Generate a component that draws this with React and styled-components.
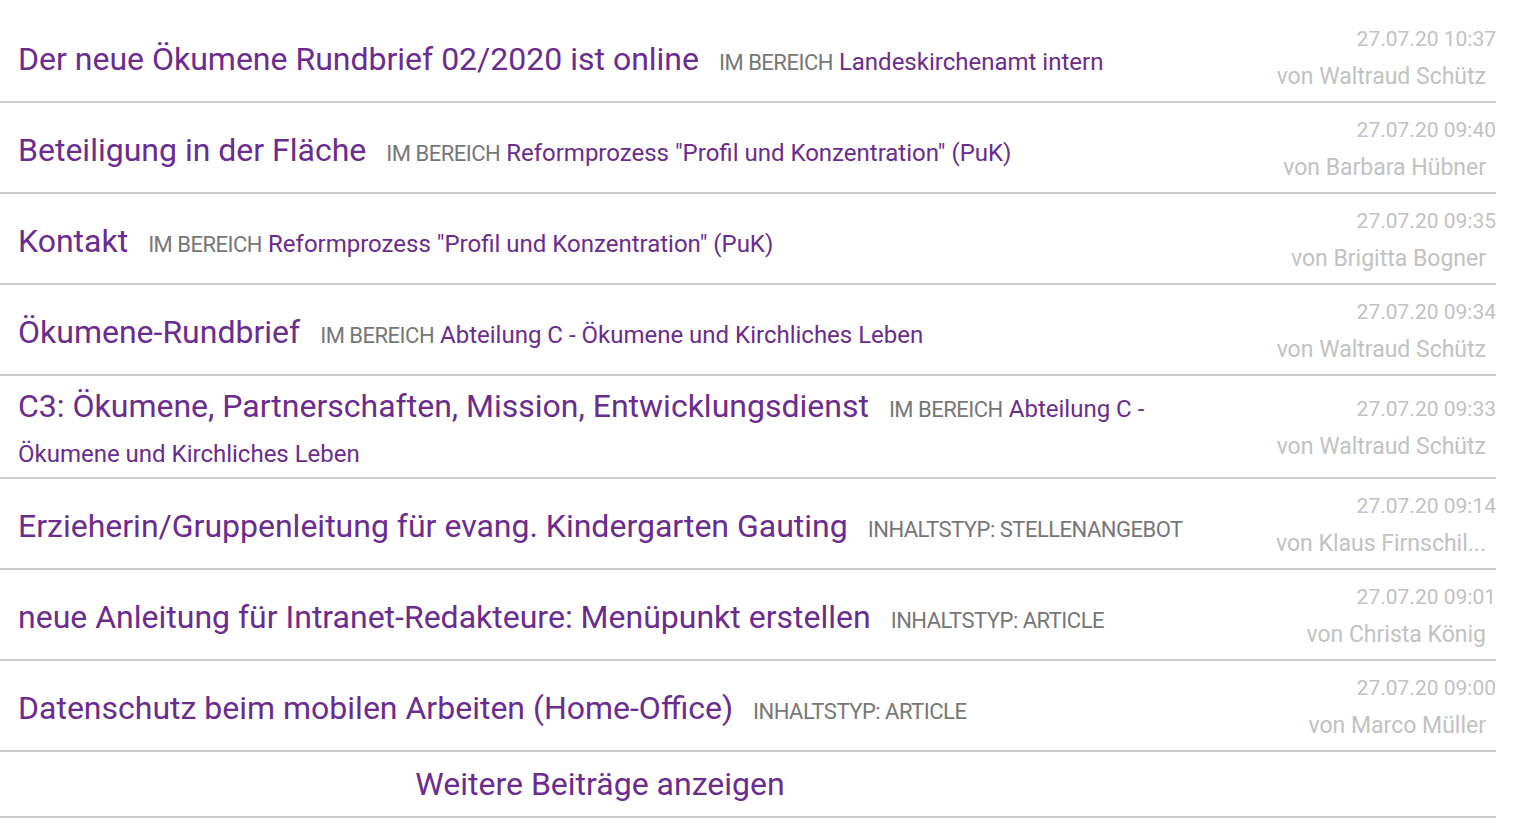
import styled, { createGlobalStyle } from "styled-components";

const GlobalStyle = createGlobalStyle`
  body {
    margin: 0;
    background: #fff;
    font-family: Roboto, "Noto Sans", Arial, sans-serif;
  }
`;

const posts = [
  {
    title: "Der neue Ökumene Rundbrief 02/2020 ist online",
    label: "IM BEREICH",
    value: "Landeskirchenamt intern",
    date: "27.07.20 10:37",
    author: "von Waltraud Schütz",
  },
  {
    title: "Beteiligung in der Fläche",
    label: "IM BEREICH",
    value: 'Reformprozess "Profil und Konzentration" (PuK)',
    date: "27.07.20 09:40",
    author: "von Barbara Hübner",
  },
  {
    title: "Kontakt",
    label: "IM BEREICH",
    value: 'Reformprozess "Profil und Konzentration" (PuK)',
    date: "27.07.20 09:35",
    author: "von Brigitta Bogner",
  },
  {
    title: "Ökumene-Rundbrief",
    label: "IM BEREICH",
    value: "Abteilung C - Ökumene und Kirchliches Leben",
    date: "27.07.20 09:34",
    author: "von Waltraud Schütz",
  },
  {
    title: "C3: Ökumene, Partnerschaften, Mission, Entwicklungsdienst",
    label: "IM BEREICH",
    value: "Abteilung C - Ökumene und Kirchliches Leben",
    date: "27.07.20 09:33",
    author: "von Waltraud Schütz",
  },
  {
    title: "Erzieherin/Gruppenleitung für evang. Kindergarten Gauting",
    label: "INHALTSTYP: STELLENANGEBOT",
    date: "27.07.20 09:14",
    author: "von Klaus Firnschil...",
  },
  {
    title: "neue Anleitung für Intranet-Redakteure: Menüpunkt erstellen",
    label: "INHALTSTYP: ARTICLE",
    date: "27.07.20 09:01",
    author: "von Christa König",
  },
  {
    title: "Datenschutz beim mobilen Arbeiten (Home-Office)",
    label: "INHALTSTYP: ARTICLE",
    date: "27.07.20 09:00",
    author: "von Marco Müller",
  },
];

const App = () => {
  return (
    <>
      <GlobalStyle />
      <ListWrapper>
        {posts.map((post, i) => (
          <PostRow key={i}>
            <PostMain>
              <PostTitle>{post.title}</PostTitle>
              <MetaLabel>{post.label}</MetaLabel>
              {post.value && <MetaValue> {post.value}</MetaValue>}
            </PostMain>
            <PostInfo>
              <PostDate>{post.date}</PostDate>
              <PostAuthor>{post.author}</PostAuthor>
            </PostInfo>
          </PostRow>
        ))}
        <MoreRow>
          <MoreLink>Weitere Beiträge anzeigen</MoreLink>
        </MoreRow>
      </ListWrapper>
    </>
  );
};

export default App;

const ListWrapper = styled.ul`
  list-style: none;
  margin: 0;
  padding: 12px 0 0;
  width: 1496px;
`;

const PostRow = styled.li`
  display: flex;
  align-items: center;
  border-bottom: 2px solid #cccccc;
  min-height: 89px;
`;

const PostMain = styled.div`
  width: 1215px;
  flex-shrink: 0;
  box-sizing: border-box;
  padding: 8px 18px 3px;
  font-size: 32px;
  line-height: 45px;
`;

const PostTitle = styled.span`
  font-size: 32px;
  color: #6a2c8e;
  margin-right: 20px;
`;

const MetaLabel = styled.span`
  font-size: 22px;
  line-height: 1;
  letter-spacing: -0.5px;
  color: #777777;
`;

const MetaValue = styled.span`
  font-size: 24px;
  line-height: 1;
  color: #6a2c8e;
`;

const PostInfo = styled.div`
  flex: 1;
  display: flex;
  flex-direction: column;
  align-items: flex-end;
  padding: 8px 0 5px;
  white-space: nowrap;
`;

const PostDate = styled.time`
  font-size: 21px;
  line-height: 38px;
  color: #c2c2c2;
`;

const PostAuthor = styled.span`
  font-size: 23px;
  line-height: 38px;
  color: #c2c2c2;
  padding-right: 10px;
`;

const MoreRow = styled.li`
  display: flex;
  border-bottom: 2px solid #cccccc;
  height: 64px;
`;

const MoreLink = styled.a`
  width: 1200px;
  display: flex;
  align-items: center;
  justify-content: center;
  font-size: 32px;
  color: #6a2c8e;
  cursor: pointer;
`;
